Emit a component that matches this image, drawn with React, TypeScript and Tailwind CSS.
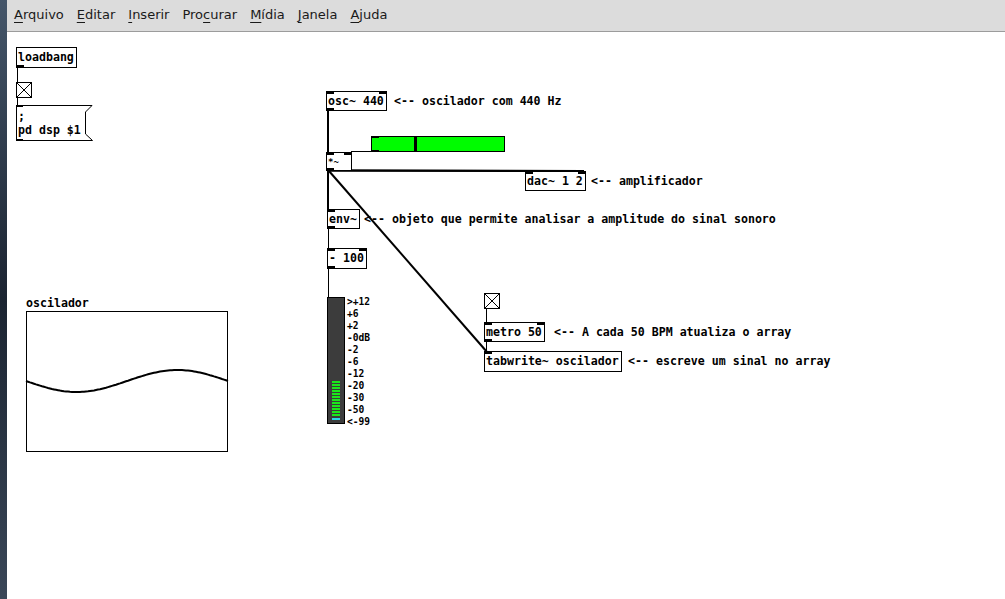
import React from "react";

const mono = "font-['DejaVu_Sans_Mono',monospace] font-bold text-[11.6px] text-black";

const Tab = ({ className }: { className: string }) => (
  <div className={`absolute h-[2px] w-[7px] bg-black ${className}`} />
);

type BoxProps = {
  className: string;
  text: string;
  inlets?: "none" | "left" | "both";
  outlet?: boolean;
};

const ObjBox = ({ className, text, inlets = "left", outlet = true }: BoxProps) => (
  <div className={`absolute border border-black bg-white pl-[1px] leading-[19px] whitespace-pre ${mono} ${className}`}>
    {text}
    {inlets !== "none" && <Tab className="left-0 top-0" />}
    {inlets === "both" && <Tab className="right-0 top-0" />}
    {outlet && <Tab className="bottom-0 left-0" />}
  </div>
);

const Comment = ({ className, text }: { className: string; text: string }) => (
  <div className={`absolute leading-[21px] whitespace-pre ${mono} ${className}`}>{text}</div>
);

const Toggle = ({ className }: { className: string }) => (
  <div className={`absolute h-[16px] w-[16px] border border-black bg-white ${className}`}>
    <svg width="14" height="14" viewBox="0 0 14 14" className="block">
      <line x1="0" y1="0" x2="14" y2="14" stroke="black" strokeWidth="1" />
      <line x1="14" y1="0" x2="0" y2="14" stroke="black" strokeWidth="1" />
    </svg>
  </div>
);

const menus: [string, string, string][] = [
  ["", "A", "rquivo"],
  ["", "E", "ditar"],
  ["", "I", "nserir"],
  ["Pro", "c", "urar"],
  ["", "M", "ídia"],
  ["", "J", "anela"],
  ["", "A", "juda"],
];

const vuLabels = [">+12", "+6", "+2", "-0dB", "-2", "-6", "-12", "-20", "-30", "-50", "<-99"];

export default function App() {
  const wave: string[] = [];
  for (let x = 19; x <= 221; x += 2) {
    const y = 349 + 11 * Math.sin((2 * Math.PI * (x - 19)) / 202);
    wave.push(`${x},${y.toFixed(1)}`);
  }

  return (
    <div className="flex h-[599px] w-[1005px] overflow-hidden bg-white">
      {/* desktop strip */}
      <div className="w-[7px] shrink-0 bg-gradient-to-b from-[#45566a] via-[#1b2431] to-[#3a4758]" />

      <div className="flex flex-1 flex-col">
        {/* menu bar */}
        <div className="flex h-[32px] shrink-0 items-center gap-[13px] border-b border-[#9c9c9c] bg-[#dcdcdc] pb-[1px] pl-[7px] font-['DejaVu_Sans',sans-serif] text-[13px] text-[#1a1a1a]">
          {menus.map(([pre, u, rest], i) => (
            <span key={i}>
              {pre}
              <span className="underline underline-offset-[3px]">{u}</span>
              {rest}
            </span>
          ))}
        </div>

        {/* patch canvas */}
        <div className="relative flex-1 bg-white">
          <svg className="pointer-events-none absolute inset-0" width="998" height="567">
            <g stroke="black" fill="none">
              <line x1="10.5" y1="35" x2="10.5" y2="50" strokeWidth="1" />
              <line x1="10.5" y1="66" x2="10.5" y2="73" strokeWidth="1" />
              <line x1="321" y1="78" x2="321" y2="120" strokeWidth="2" />
              <line x1="344" y1="119.5" x2="364" y2="119.5" strokeWidth="1" />
              <line x1="321" y1="138.5" x2="520" y2="139" strokeWidth="2" />
              <line x1="321" y1="138.5" x2="577" y2="139" strokeWidth="2" />
              <line x1="321" y1="138" x2="321" y2="177" strokeWidth="2" />
              <line x1="322" y1="139" x2="480" y2="320" strokeWidth="2" />
              <line x1="321.5" y1="196" x2="321.5" y2="216" strokeWidth="1" />
              <line x1="321.5" y1="236" x2="321.5" y2="265" strokeWidth="1" />
              <line x1="479.5" y1="276" x2="479.5" y2="290" strokeWidth="1" />
              <line x1="479.5" y1="309" x2="479.5" y2="319" strokeWidth="1" />
            </g>
          </svg>

          {/* left column */}
          <ObjBox className="left-[9px] top-[15px] w-[61px] h-[21px]" text="loadbang" inlets="none" />
          <Toggle className="left-[9px] top-[50px]" />
          <div className={`absolute left-[9px] top-[73px] h-[36px] w-[77px] ${mono}`}>
            <div className="absolute inset-y-0 left-0 w-[69px] border-y border-l border-black pl-[1px] pt-[3px] leading-[14px] whitespace-pre">
              {";\npd dsp $1"}
            </div>
            <svg className="absolute right-0 top-0" width="8" height="36" viewBox="0 0 8 36">
              <polyline points="0,0.5 7,0.5 0.5,7 0.5,29 7.5,35.5 0,35.5" fill="none" stroke="black" strokeWidth="1" />
            </svg>
            <Tab className="left-0 top-0" />
            <Tab className="bottom-0 left-0" />
          </div>

          {/* array */}
          <div className={`absolute left-[19px] top-[264px] leading-[14px] ${mono}`}>oscilador</div>
          <div className="absolute left-[19px] top-[279px] h-[141px] w-[202px] border border-black" />
          <svg className="pointer-events-none absolute inset-0" width="998" height="567">
            <polyline points={wave.join(" ")} fill="none" stroke="black" strokeWidth="2" />
          </svg>

          {/* oscillator chain */}
          <ObjBox className="left-[319px] top-[59px] w-[61px] h-[20px]" text="osc~ 440" inlets="both" />
          <Comment className="left-[387px] top-[59px]" text="<-- oscilador com 440 Hz" />

          <div className="absolute left-[364px] top-[104px] h-[16px] w-[134px] border border-black bg-[#00fc00]">
            <div className="absolute left-[42px] top-0 h-full w-[3px] bg-black" />
            <Tab className="left-0 top-[-1px] w-[6px]" />
            <Tab className="bottom-[-1px] left-0 w-[6px]" />
          </div>

          <ObjBox className="left-[319px] top-[120px] w-[26px] h-[19px] !text-[9px]" text="*~" inlets="both" />

          <ObjBox className="left-[518px] top-[139px] w-[61px] h-[20px]" text="dac~ 1 2" inlets="both" outlet={false} />
          <Comment className="left-[584px] top-[139px]" text="<-- amplificador" />

          <ObjBox className="left-[320px] top-[177px] w-[33px] h-[20px]" text="env~" />
          <Comment className="left-[357px] top-[177px]" text="<-- objeto que permite analisar a amplitude do sinal sonoro" />

          <ObjBox className="left-[320px] top-[216px] w-[40px] h-[21px]" text="- 100" inlets="both" />

          {/* VU meter */}
          <div className="absolute left-[320px] top-[265px] flex h-[127px] w-[18px] flex-col justify-end gap-[1px] border border-black bg-[#3c3c3c] px-[4px] pb-[3px]">
            {Array.from({ length: 12 }).map((_, i) => (
              <div key={i} className="h-[2px] bg-[#1ae81a]" />
            ))}
            <div className="mt-[1px] h-[2px] bg-[#28d8e8]" />
          </div>
          <div className="absolute left-[340px] top-[264px] flex flex-col font-['DejaVu_Sans_Mono',monospace] text-[9.6px] font-bold leading-[12px] text-black">
            {vuLabels.map((l) => (
              <span key={l}>{l}</span>
            ))}
          </div>

          {/* tabwrite chain */}
          <Toggle className="left-[477px] top-[261px]" />
          <ObjBox className="left-[477px] top-[290px] w-[61px] h-[20px]" text="metro 50" inlets="both" />
          <Comment className="left-[547px] top-[290px]" text="<-- A cada 50 BPM atualiza o array" />
          <ObjBox className="left-[477px] top-[319px] w-[138px] h-[21px]" text="tabwrite~ oscilador" inlets="left" outlet={false} />
          <Comment className="left-[621px] top-[319px]" text="<-- escreve um sinal no array" />
        </div>
      </div>
    </div>
  );
}
